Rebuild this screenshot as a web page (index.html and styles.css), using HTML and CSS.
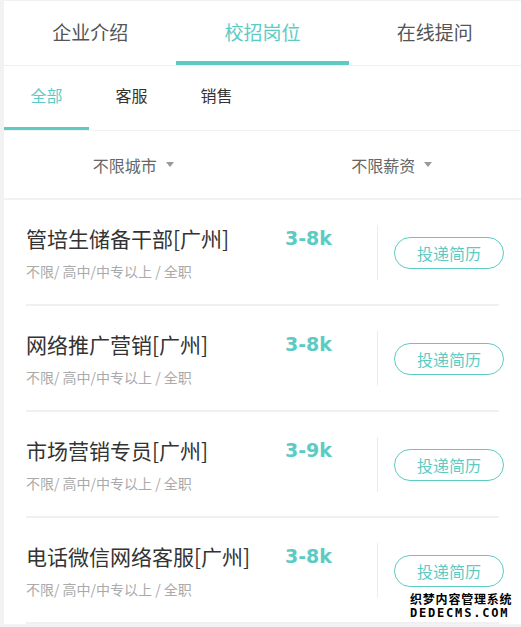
FILE: index.html
```html
<!DOCTYPE html>
<html lang="zh-CN">
<head>
<meta charset="utf-8">
<title>校招岗位</title>
<link rel="stylesheet" href="styles.css">
</head>
<body>
<div class="page">
  <nav class="tabs">
    <div class="tab">企业介绍</div>
    <div class="tab active">校招岗位</div>
    <div class="tab">在线提问</div>
  </nav>
  <nav class="subtabs">
    <div class="subtab active">全部</div>
    <div class="subtab">客服</div>
    <div class="subtab">销售</div>
  </nav>
  <div class="filters">
    <div class="filter">不限城市<span class="caret"></span></div>
    <div class="filter">不限薪资<span class="caret"></span></div>
  </div>
  <ul class="jobs">
    <li class="job">
      <div class="info">
        <div class="title">管培生储备干部[广州]</div>
        <div class="meta">不限/ 高中/中专以上 / 全职</div>
      </div>
      <div class="salary">3-8k</div>
      <div class="divider"></div>
      <div class="btn">投递简历</div>
    </li>
    <li class="job">
      <div class="info">
        <div class="title">网络推广营销[广州]</div>
        <div class="meta">不限/ 高中/中专以上 / 全职</div>
      </div>
      <div class="salary">3-8k</div>
      <div class="divider"></div>
      <div class="btn">投递简历</div>
    </li>
    <li class="job">
      <div class="info">
        <div class="title">市场营销专员[广州]</div>
        <div class="meta">不限/ 高中/中专以上 / 全职</div>
      </div>
      <div class="salary">3-9k</div>
      <div class="divider"></div>
      <div class="btn">投递简历</div>
    </li>
    <li class="job">
      <div class="info">
        <div class="title">电话微信网络客服[广州]</div>
        <div class="meta">不限/ 高中/中专以上 / 全职</div>
      </div>
      <div class="salary">3-8k</div>
      <div class="divider"></div>
      <div class="btn">投递简历</div>
    </li>
  </ul>
  <div class="watermark">
    <div class="wm-cn">织梦内容管理系统</div>
    <div class="wm-en">DEDECMS.COM</div>
  </div>
</div>
</body>
</html>
```

FILE: styles.css
```css
* { box-sizing: border-box; }
html, body { margin: 0; padding: 0; }
body {
  background: #f2f2f2;
  font-family: "Noto Sans CJK SC", "Noto Sans", sans-serif;
  width: 521px;
  height: 627px;
  overflow: hidden;
}
.page {
  position: relative;
  margin: 1px 0 0 4px;
  background: #fff;
  height: 623px;
}
.tabs {
  display: flex;
  height: 65px;
  border-bottom: 1px solid #efefef;
}
.tab {
  flex: 1;
  position: relative;
  display: flex;
  align-items: center;
  justify-content: center;
  font-size: 19px;
  color: #555;
  padding-bottom: 4px;
}
.tab.active { color: #5ccbc3; }
.tab.active::after {
  content: "";
  position: absolute;
  left: 0;
  right: 0;
  bottom: 0;
  height: 4px;
  background: #5ccbc3;
}
.subtabs {
  display: flex;
  height: 65px;
  border-bottom: 1px solid #f2f2f2;
}
.subtab {
  width: 85px;
  position: relative;
  display: flex;
  align-items: center;
  justify-content: center;
  font-size: 16px;
  color: #333;
  padding-bottom: 6px;
}
.subtab.active { color: #5ccbc3; }
.subtab.active::after {
  content: "";
  position: absolute;
  left: 0;
  right: 0;
  bottom: 0;
  height: 3px;
  background: #5ccbc3;
}
.filters {
  display: flex;
  height: 69px;
  border-bottom: 2px solid #f2f2f2;
}
.filter {
  flex: 1;
  display: flex;
  align-items: center;
  justify-content: center;
  font-size: 16px;
  color: #666;
}
.caret {
  width: 0;
  height: 0;
  margin-left: 9px;
  border-left: 4.5px solid transparent;
  border-right: 4.5px solid transparent;
  border-top: 5px solid #999;
}
.jobs {
  list-style: none;
  margin: 0;
  padding: 0;
}
.job {
  display: flex;
  align-items: flex-start;
  margin: 0 22px;
  height: 106px;
  padding-top: 25px;
  border-bottom: 2px solid #f0f0f0;
}
.job > * { flex-shrink: 0; }
.info { width: 259px; }
.title {
  font-size: 21px;
  line-height: 26px;
  color: #333;
  white-space: nowrap;
}
.meta {
  margin-top: 10px;
  font-size: 14px;
  line-height: 20px;
  color: #aaa;
  white-space: pre;
}
.salary {
  width: 92px;
  font-family: "DejaVu Sans", sans-serif;
  font-weight: bold;
  font-size: 19px;
  line-height: 26px;
  color: #5ccbc3;
}
.divider {
  width: 1px;
  height: 55px;
  background: #ececec;
}
.btn {
  margin-top: 12px;
  margin-left: 16px;
  width: 110px;
  height: 32px;
  border: 1.5px solid #5ccbc3;
  border-radius: 16px;
  display: flex;
  align-items: center;
  justify-content: center;
  font-size: 16px;
  color: #5ccbc3;
}
.watermark {
  position: absolute;
  left: 406px;
  top: 590px;
  color: #000;
  font-weight: bold;
  text-shadow: 1px 0 #fff, -1px 0 #fff, 0 1px #fff, 0 -1px #fff, 1px 1px #fff, -1px -1px #fff, 1px -1px #fff, -1px 1px #fff;
}
.wm-cn {
  font-size: 12px;
  line-height: 15px;
  letter-spacing: 0.8px;
}
.wm-en {
  font-family: "DejaVu Sans Mono", monospace;
  font-size: 12px;
  line-height: 14px;
  letter-spacing: 1.8px;
}
```
